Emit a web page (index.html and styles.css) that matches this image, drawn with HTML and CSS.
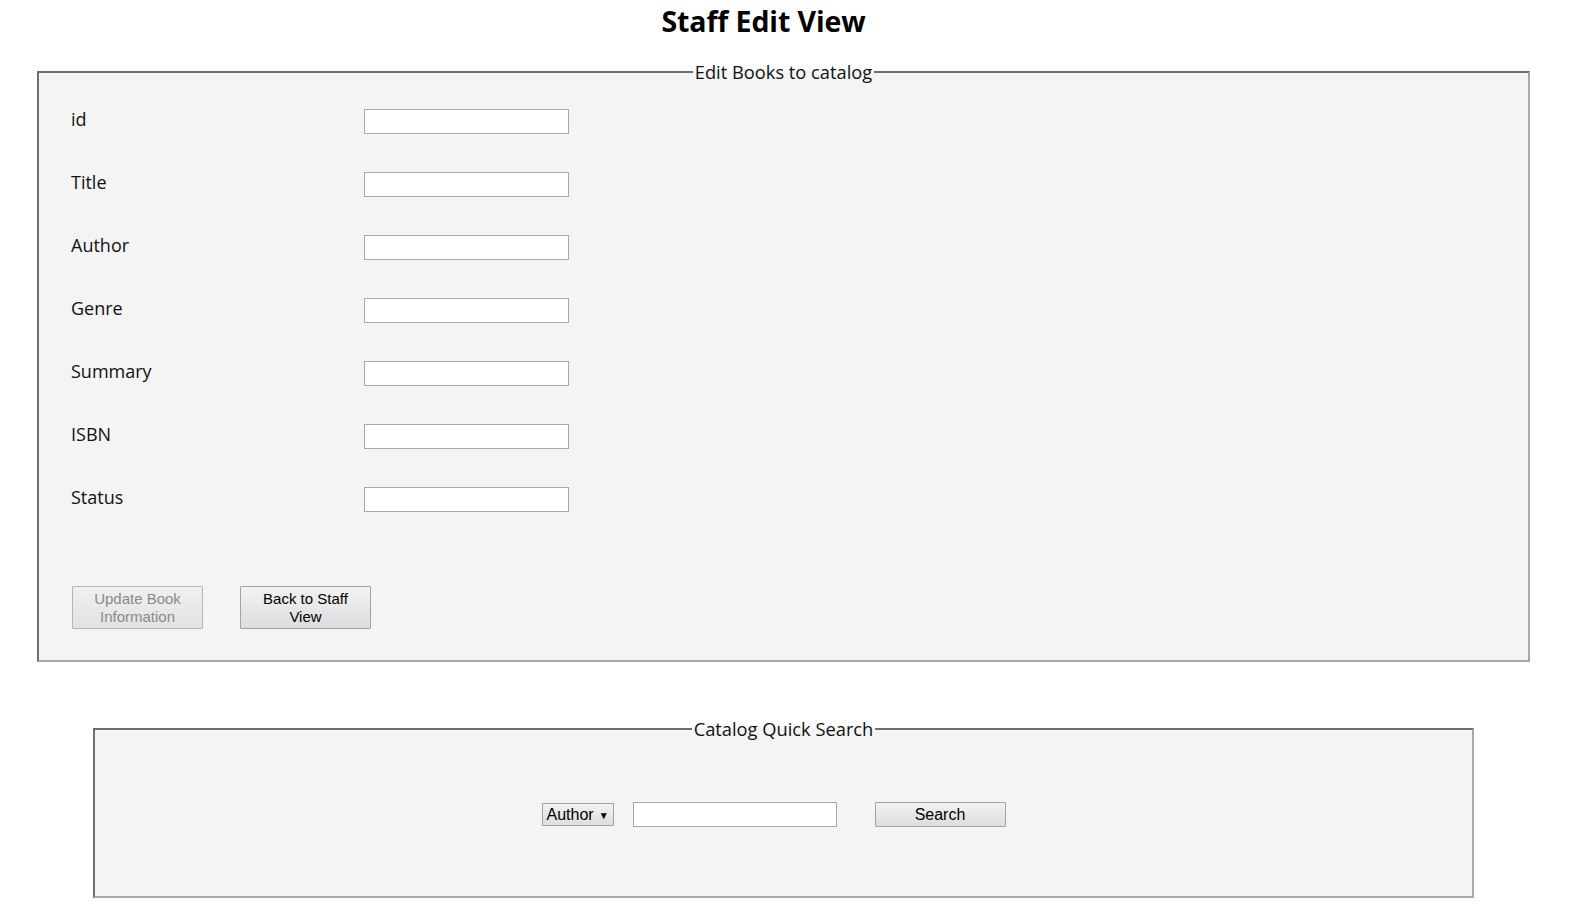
FILE: index.html
```html
<!DOCTYPE html>
<html>
<head>
<meta charset="utf-8">
<title>Staff Edit View</title>
<link rel="stylesheet" href="styles.css">
</head>
<body>
<h1 class="page-title">Staff Edit View</h1>
<form class="edit-form">
  <fieldset class="box box-edit">
    <legend class="box-legend">Edit Books to catalog</legend>
    <div class="rows">
      <div class="row"><label class="row-label">id</label><input class="field" type="text"></div>
      <div class="row"><label class="row-label">Title</label><input class="field" type="text"></div>
      <div class="row"><label class="row-label">Author</label><input class="field" type="text"></div>
      <div class="row"><label class="row-label">Genre</label><input class="field" type="text"></div>
      <div class="row"><label class="row-label">Summary</label><input class="field" type="text"></div>
      <div class="row"><label class="row-label">ISBN</label><input class="field" type="text"></div>
      <div class="row"><label class="row-label">Status</label><input class="field" type="text"></div>
    </div>
    <div class="actions">
      <button type="button" class="btn btn-disabled" disabled>Update Book Information</button>
      <button type="button" class="btn">Back to Staff View</button>
    </div>
  </fieldset>
</form>
<form class="search-form">
  <fieldset class="box box-search">
    <legend class="box-legend">Catalog Quick Search</legend>
    <div class="search-row">
      <div class="select"><span>Author</span><span class="caret">▼</span></div>
      <input class="field search-field" type="text">
      <button type="button" class="btn btn-search">Search</button>
    </div>
  </fieldset>
</form>
</body>
</html>
```
FILE: styles.css
```css
html, body {
  margin: 0;
  padding: 0;
  background: #ffffff;
}
body {
  margin: 8px;
  font-family: "Open Sans", "Noto Sans", "DejaVu Sans", sans-serif;
  color: #111;
}
.page-title {
  margin: 0;
  padding-right: 43px;
  height: 28px;
  line-height: 27px;
  text-align: center;
  font-size: 28.5px;
  font-weight: 700;
  letter-spacing: -0.1px;
  color: #000;
}
.edit-form {
  margin: 24px 32px 0 29px;
}
.box {
  margin: 0;
  border: 2px solid #6e6e6e;
  border-color: #6e6e6e #a8a8a8 #a8a8a8 #6e6e6e;
  background: #f4f4f4;
  padding: 0;
}
.box-legend {
  margin: 0 auto;
  padding: 0 2px;
  font-size: 18.3px;
  line-height: 24px;
  color: #111;
}
.rows {
  display: flex;
  flex-direction: column;
  gap: 38px;
  padding: 25px 0 0 32px;
}
.row {
  display: flex;
  align-items: center;
  height: 25px;
}
.row-label {
  width: 293px;
  font-size: 18px;
  line-height: 22px;
  margin-top: -5px;
  color: #111;
}
.field {
  box-sizing: border-box;
  width: 205px;
  height: 25px;
  margin: 0;
  border: 1px solid #a9a9a9;
  background: #fff;
  padding: 0 3px;
}
.actions {
  display: flex;
  gap: 37px;
  padding: 74px 0 31px 33px;
}
.btn {
  box-sizing: border-box;
  width: 131px;
  height: 43px;
  margin: 0;
  padding: 0 6px;
  border: 1px solid #a3a3a3;
  border-radius: 1px;
  background: linear-gradient(#f2f2f2, #dddddd);
  font-family: "Liberation Sans", Arial, sans-serif;
  font-size: 15px;
  line-height: 18px;
  color: #000;
}
.btn-disabled {
  color: #8a8a8a;
  background: linear-gradient(#f0f0f0, #e2e2e2);
  border-color: #b5b5b5;
}
.search-form {
  margin: 55px 88px 0 85px;
}
.box-search {
  height: 181px;
  box-sizing: border-box;
}
.search-row {
  display: flex;
  justify-content: center;
  align-items: center;
  padding: 61px 0 0 0;
  margin-left: -20px;
}
.select {
  box-sizing: border-box;
  display: flex;
  align-items: center;
  gap: 5px;
  width: 72px;
  height: 23px;
  padding: 0 4px;
  border: 1px solid #a3a3a3;
  background: linear-gradient(#f2f2f2, #dedede);
  font-family: "Liberation Sans", Arial, sans-serif;
  font-size: 16px;
  color: #000;
}
.caret {
  font-size: 10px;
  margin-top: 2px;
}
.search-field {
  width: 204px;
  margin-left: 19px;
}
.btn-search {
  height: 25px;
  margin-left: 38px;
  font-size: 16px;
}
```
